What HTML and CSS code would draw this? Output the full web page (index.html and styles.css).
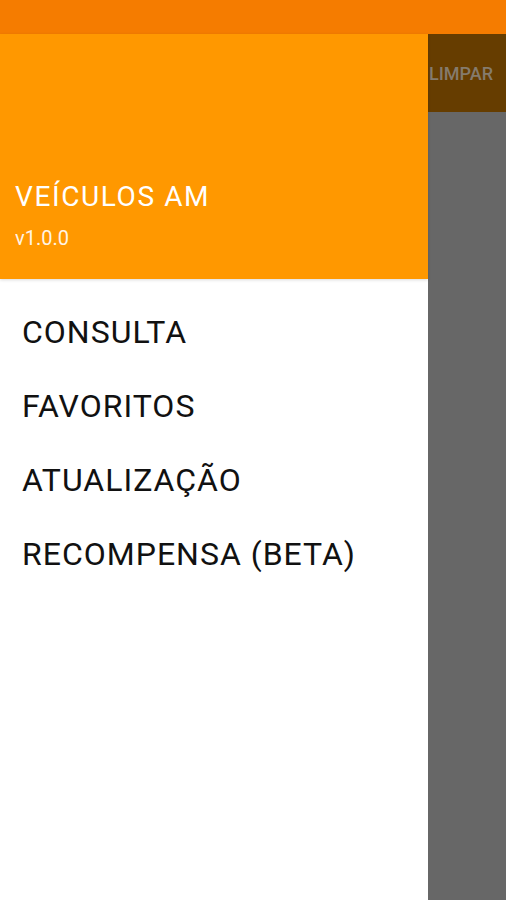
FILE: index.html
```html
<!DOCTYPE html>
<html lang="pt">
<head>
  <meta charset="UTF-8">
  <meta name="viewport" content="width=device-width, initial-scale=1.0">
  <title>Veículos AM</title>
  <link rel="stylesheet" href="styles.css">
</head>
<body>
  <div class="status"></div>
  <div class="screen">
    <div class="drawer">
      <div class="header">
        <p class="title">VEÍCULOS AM</p>
        <p class="version">v1.0.0</p>
      </div>
      <ul class="nav">
        <li>CONSULTA</li>
        <li>FAVORITOS</li>
        <li>ATUALIZAÇÃO</li>
        <li>RECOMPENSA (BETA)</li>
      </ul>
    </div>
    <div class="scrim">
      <div class="toolbar">
        <span class="action">LIMPAR</span>
      </div>
    </div>
  </div>
</body>
</html>
```

FILE: styles.css
```css
* {
  padding: 0;
  margin: 0;
}
body {
  width: 506px;
  height: 900px;
  overflow: hidden;
  font-family: Roboto, "Liberation Sans", sans-serif;
  background: #fff;
}
.status {
  height: 34px;
  background: #f57c00;
}
.screen {
  display: flex;
  height: 866px;
}
.drawer {
  width: 428px;
  flex: none;
  background: #fff;
}
.header {
  height: 245px;
  background: #ff9800;
  box-sizing: border-box;
  padding: 0 15px 29px;
  display: flex;
  flex-direction: column;
  justify-content: flex-end;
  box-shadow: 0 1px 3px rgba(0, 0, 0, 0.15);
  position: relative;
}
.title {
  color: #fff;
  font-size: 28px;
  line-height: 32px;
  letter-spacing: 1.6px;
}
.version {
  color: #fff;
  font-size: 20px;
  line-height: 24px;
  margin-top: 13px;
  opacity: 0.9;
}
.nav {
  list-style: none;
  padding: 16px 0 0 22px;
}
.nav li {
  font-size: 32px;
  line-height: 74px;
  letter-spacing: 1px;
  color: #111;
}
.scrim {
  flex: 1;
  background: #676767;
  overflow: hidden;
}
.toolbar {
  height: 78px;
  background: #663d00;
  display: flex;
  align-items: center;
}
.action {
  margin-left: 1px;
  font-size: 18px;
  font-weight: 500;
  color: #857b6d;
}
```
